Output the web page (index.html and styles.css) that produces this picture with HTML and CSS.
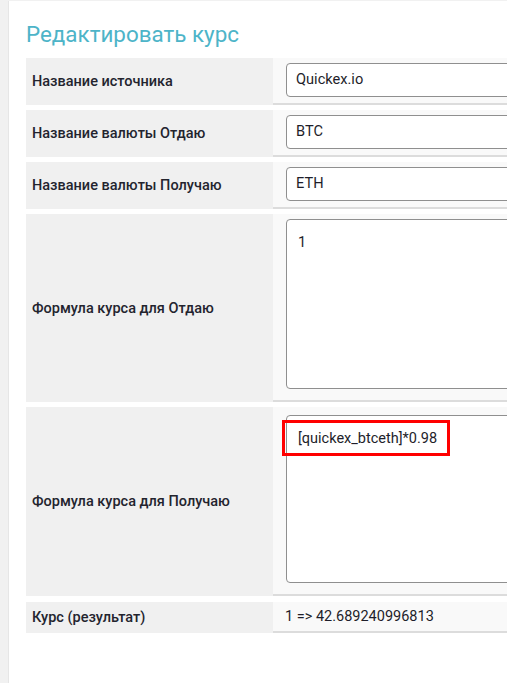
FILE: index.html
```html
<!DOCTYPE html>
<html lang="ru">
<head>
<meta charset="utf-8">
<title>Редактировать курс</title>
<link rel="stylesheet" href="styles.css">
</head>
<body>
<div class="panel">
  <h1 class="title">Редактировать курс</h1>
  <div class="form">
    <div class="row">
      <div class="label">Название источника</div>
      <div class="value"><div class="input">Quickex.io</div></div>
    </div>
    <div class="row">
      <div class="label">Название валюты Отдаю</div>
      <div class="value"><div class="input">BTC</div></div>
    </div>
    <div class="row">
      <div class="label">Название валюты Получаю</div>
      <div class="value"><div class="input">ETH</div></div>
    </div>
    <div class="row row-area1">
      <div class="label">Формула курса для Отдаю</div>
      <div class="value"><div class="textarea">1</div></div>
    </div>
    <div class="row row-area2">
      <div class="label">Формула курса для Получаю</div>
      <div class="value"><div class="textarea">[quickex_btceth]*0.98</div><div class="highlight"></div></div>
    </div>
    <div class="row row-result">
      <div class="label">Курс (результат)</div>
      <div class="value value-text">1 =&gt; 42.689240996813</div>
    </div>
  </div>
</div>
</body>
</html>
```
FILE: styles.css
```css
html, body {
  margin: 0;
  padding: 0;
}
body {
  background: #f1f1f1;
  font-family: Roboto, "Liberation Sans", sans-serif;
  overflow: hidden;
  width: 507px;
  height: 683px;
}
.panel {
  margin: 1px 0 0 8px;
  background: #fff;
  width: 720px;
  height: 700px;
  padding: 0 0 0 17px;
  box-sizing: border-box;
  border-left: 1px solid #e6e6e6;
}
.title {
  margin: 0;
  padding: 20px 0 0 0;
  height: 38px;
  box-sizing: border-box;
  font-size: 22.4px;
  line-height: 26px;
  font-weight: 400;
  color: #4db4c8;
}
.form {
  display: flex;
  flex-direction: column;
  gap: 5px;
  width: 680px;
  margin-top: 19px;
}
.row {
  display: grid;
  grid-template-columns: 247px 1fr;
}
.label {
  background: #f0f0f0;
  display: flex;
  align-items: center;
  padding-left: 6px;
  font-size: 14.5px;
  font-weight: 500;
  color: #23242e;
}
.value {
  background: #f9f9f9;
  border-bottom: 2px solid #dcdcdc;
  padding: 5px 0 6px 13px;
  position: relative;
}
.input {
  height: 34px;
  box-sizing: border-box;
  border: 1px solid #8f8f8f;
  border-radius: 4px;
  background: #fff;
  padding: 0 0 0 9px;
  font-size: 14.6px;
  line-height: 31px;
  color: #1e1e2a;
}
.textarea {
  height: 170px;
  box-sizing: border-box;
  border: 1px solid #8f8f8f;
  border-radius: 4px;
  background: #fff;
  padding: 14px 0 0 11px;
  font-size: 14.5px;
  line-height: 18px;
  color: #1e1e2a;
}
.row-area1 .value {
  padding-bottom: 11px;
}
.row-area2 .value {
  padding-top: 8px;
  padding-bottom: 11px;
}
.row-area2 .textarea {
  height: 168px;
}
.highlight {
  position: absolute;
  left: 9px;
  top: 13px;
  width: 168px;
  height: 36px;
  box-sizing: border-box;
  border: 3px solid #ff0000;
}
.value-text {
  padding: 6px 0 5px 12px;
  font-size: 14.5px;
  line-height: 18px;
  color: #1e1e2a;
}
.row-result {
  margin-top: 1px;
}
```
